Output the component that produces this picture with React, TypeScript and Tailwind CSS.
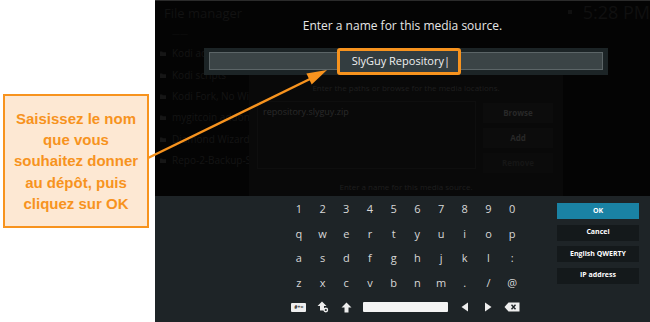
import React from "react";

const KF = { fontFamily: '"Open Sans", "Noto Sans", sans-serif' };

const rows: string[][] = [
  ["1", "2", "3", "4", "5", "6", "7", "8", "9", "0"],
  ["q", "w", "e", "r", "t", "y", "u", "i", "o", "p"],
  ["a", "s", "d", "f", "g", "h", "j", "k", "l", ":"],
  ["z", "x", "c", "v", "b", "n", "m", ".", "/", "@"],
];

const menu = [
  "Kodi addons",
  "Kodi scripts",
  "Kodi Fork, No Wizard",
  "mygitcoin addons repo",
  "Diamond Wizard Server",
  "Repo-2-Backup-Server",
];

function Folder() {
  return (
    <svg width="6" height="5" viewBox="0 0 6 5" className="shrink-0">
      <path d="M0 0.5h2.2l0.6 0.7H6V5H0z" fill="#161616" />
    </svg>
  );
}

export default function App() {
  return (
    <div className="relative flex w-[650px] h-[322px] overflow-hidden bg-white">
      {/* callout column */}
      <div className="w-[155px] shrink-0 pt-[94px] pl-[3px]">
        <div
          className="w-[146px] h-[134px] border-2 border-[#f7931e] bg-[#fde8d3] flex flex-col items-center justify-center text-center font-bold text-[15px] leading-[21.2px] text-[#f7931e]"
          style={{ fontFamily: '"Liberation Sans", Arial, sans-serif' }}
        >
          <span>Saisissez le nom</span>
          <span>que vous</span>
          <span>souhaitez donner</span>
          <span>au dépôt, puis</span>
          <span>cliquez sur OK</span>
        </div>
      </div>

      {/* Kodi screen */}
      <div className="flex-1 flex flex-col" style={KF}>
        <div className="relative h-[196px] bg-[#040404] shadow-[inset_0_1px_0_#2b2b2b]">
          {/* dim background */}
          <div className="flex h-full">
            <div className="w-[94px] shrink-0 flex flex-col overflow-hidden">
              <div className="pl-[9px] pt-[3px] text-[13px] leading-[20px] text-[#121212] whitespace-nowrap">
                File manager
              </div>
              <div className="pl-[17px] h-[20px] flex items-center text-[8px] text-[#101010]">
                ——
              </div>
              <div className="flex flex-col">
                {menu.map((m) => (
                  <div
                    key={m}
                    className="h-[21.4px] pl-[5px] flex items-center gap-[6px] text-[10px] text-[#141414] overflow-hidden"
                  >
                    <Folder />
                    <span className="min-w-0 overflow-hidden whitespace-nowrap">{m}</span>
                  </div>
                ))}
              </div>
            </div>
            <div className="w-[314px] shrink-0 mt-[75px] bg-[#090909] flex flex-col">
              <div className="h-[26px] flex items-center justify-center text-[8px] text-[#1f1f1f] whitespace-nowrap">
                Enter the paths or browse for the media locations.
              </div>
              <div className="flex gap-[7px] px-[8px]">
                <div className="w-[219px] h-[68px] border border-[#0e0e0e] pl-[5px] pt-[3px] text-[9px] text-[#2a2a2a]">
                  repository.slyguy.zip
                </div>
                <div className="w-[70px] flex flex-col gap-[5px] pt-[2px]">
                  <div className="h-[20px] bg-[#0c0c0c] flex items-center justify-center text-[8px] font-bold text-[#282828]">
                    Browse
                  </div>
                  <div className="h-[20px] bg-[#0c0c0c] flex items-center justify-center text-[8px] font-bold text-[#282828]">
                    Add
                  </div>
                  <div className="h-[20px] bg-[#0b0b0b] flex items-center justify-center text-[8px] font-bold text-[#161616]">
                    Remove
                  </div>
                </div>
              </div>
              <div className="flex-1 flex items-end justify-center pb-[3px] text-[8px] text-[#1f1f1f] whitespace-nowrap">
                Enter a name for this media source.
              </div>
            </div>
            <div className="flex-1 flex flex-col pl-[5px] pt-[1px] overflow-hidden">
              <div className="flex items-center justify-between">
                <div className="flex items-center gap-[4px] text-[8px] text-[#101010]">
                  <span className="w-[4px] h-[4px] bg-[#101010]" />
                </div>
                <span className="text-[18px] leading-[22px] text-[#101010] whitespace-nowrap">5:28 PM</span>
              </div>
            </div>
          </div>

          {/* foreground dialog */}
          <div className="absolute left-0 top-[18px] w-full flex justify-center text-[12px] leading-[16px] text-[#e6e6e6] whitespace-nowrap">
            Enter a name for this media source.
          </div>
          <div className="absolute left-[49px] top-[48px] w-[404px] h-[27px] bg-[#1c2426] pl-[5px] pr-[5px] pt-[4px] pb-[5px]">
            <div className="w-full h-full bg-[#3b4446] border border-[#5c6567]" />
          </div>
          <div className="absolute left-[182px] top-[48px] w-[124px] h-[27px] border-[3px] border-[#f7931e] rounded-[3px] bg-[#333d40] flex items-center justify-end pr-[8px] text-[11px] text-[#f0f0f0] whitespace-nowrap">
            SlyGuy Repository|
          </div>
        </div>

        {/* keyboard */}
        <div className="h-[126px] bg-[#1e2427] flex">
          <div className="ml-[132px] w-[237px] pt-[1px] flex flex-col">
            {rows.map((r, i) => (
              <div key={i} className="grid grid-cols-10 h-[24.5px]">
                {r.map((k) => (
                  <div
                    key={k}
                    className="flex items-center justify-center text-[11px] text-[#d8d8d8]"
                  >
                    {k}
                  </div>
                ))}
              </div>
            ))}
            <div className="grid grid-cols-10 h-[24.5px]">
              <div className="flex items-center justify-center">
                <div className="w-[15px] h-[9px] bg-[#eeeeee] rounded-[1px] flex items-center justify-center text-[5px] font-bold leading-none text-[#222]">
                  #+=
                </div>
              </div>
              <div className="flex items-center justify-center">
                <svg width="12" height="12" viewBox="0 0 12 12">
                  <path d="M5 0.5L9.5 5H7V9.5H3V5H0.5z" fill="#eeeeee" />
                  <circle cx="8.8" cy="9" r="2.4" fill="#eeeeee" />
                  <circle cx="8.8" cy="9" r="1.1" fill="#1e2427" />
                </svg>
              </div>
              <div className="flex items-center justify-center">
                <svg width="11" height="11" viewBox="0 0 11 11">
                  <path d="M5.5 0.5L10.5 5.5H7.5V10.5H3.5V5.5H0.5z" fill="#eeeeee" />
                </svg>
              </div>
              <div className="col-span-4 flex items-center px-[5px]">
                <div className="w-full h-[10px] bg-[#f4f4f4] rounded-[1px]" />
              </div>
              <div className="flex items-center justify-center">
                <svg width="8" height="10" viewBox="0 0 8 10">
                  <path d="M7 0.5V9.5L0.5 5z" fill="#eeeeee" />
                </svg>
              </div>
              <div className="flex items-center justify-center">
                <svg width="8" height="10" viewBox="0 0 8 10">
                  <path d="M1 0.5V9.5L7.5 5z" fill="#eeeeee" />
                </svg>
              </div>
              <div className="flex items-center justify-center">
                <svg width="16" height="10" viewBox="0 0 16 10">
                  <path d="M4.5 0.5H15.5V9.5H4.5L0.5 5z" fill="#eeeeee" />
                  <path d="M7.5 2.8L11.5 7.2M11.5 2.8L7.5 7.2" stroke="#1e2427" strokeWidth="1.4" />
                </svg>
              </div>
            </div>
          </div>
          <div className="ml-[33px] w-[82px] pt-[7px] flex flex-col gap-[5.5px] text-[7px] font-bold text-white">
            <div className="h-[16px] bg-[#1a82a4] flex items-center justify-center">OK</div>
            <div className="h-[16px] bg-[#14191b] flex items-center justify-center">Cancel</div>
            <div className="h-[16px] bg-[#14191b] flex items-center justify-center">English QWERTY</div>
            <div className="h-[16px] bg-[#14191b] flex items-center justify-center">IP address</div>
          </div>
        </div>
      </div>

      {/* annotation arrow */}
      <svg
        className="absolute left-0 top-0 pointer-events-none"
        width="650"
        height="322"
        viewBox="0 0 650 322"
      >
        <line x1="148" y1="158" x2="312" y2="78" stroke="#f7931e" strokeWidth="2.5" />
        <path d="M327 70L311.7 84.4L306.4 73.6z" fill="#f7931e" />
      </svg>
    </div>
  );
}
